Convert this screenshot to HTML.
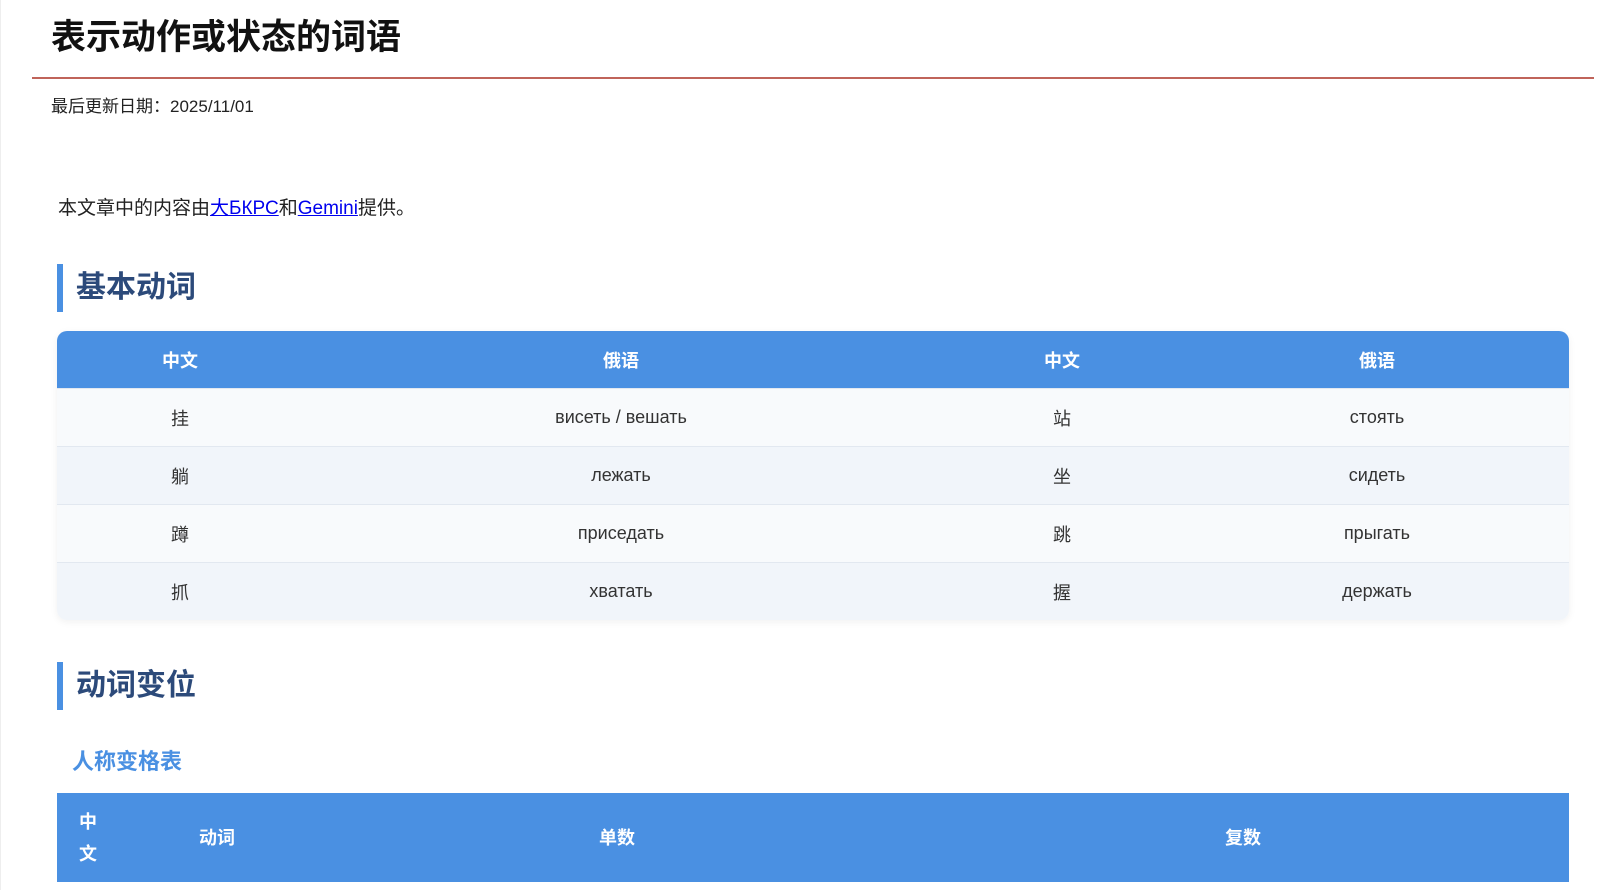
<!DOCTYPE html>
<html><head><meta charset="utf-8"><style>
*{box-sizing:border-box}
body{margin:0;width:1615px;height:890px;overflow:hidden;background:#fff;font-family:"Liberation Sans","Noto Sans CJK SC",sans-serif;color:#222;border-left:1px solid #eee}
h1{position:absolute;left:51px;top:14px;margin:0;font-size:35px;font-weight:bold;color:#111;line-height:48px}
.rule{position:absolute;left:32px;top:77px;width:1562px;height:2px;background:#c0645a}
.date{position:absolute;left:51px;top:96px;font-size:17px;line-height:22px}
.intro{position:absolute;left:58px;top:197px;font-size:19px;line-height:24px}
.intro a{color:#0000ee}
.h2{position:absolute;left:57px;border-left:6px solid #4a90e2;padding-left:13px;font-size:30px;font-weight:bold;color:#2c4a7a;height:48px;line-height:48px}
.h3{position:absolute;left:72px;top:748px;font-size:22px;font-weight:bold;color:#4a90e2;line-height:28px}
table{position:absolute;left:57px;width:1512px;border-collapse:separate;border-spacing:0;font-size:18px;table-layout:fixed}
.t1{top:331px;border-radius:10px;overflow:hidden;box-shadow:0 2px 8px rgba(0,0,0,.06)}
th{background:#4a90e2;color:#fff;font-weight:bold;text-align:center}
.t1 th{height:57px}
.t1 td{height:58px;text-align:center;color:#333;border-top:1px solid #e2e8f0}
.t1 tr:nth-child(odd) td{background:#f8fafc}
.t1 tr:nth-child(even) td{background:#f1f5fa}
.t2{top:793px}
.t2 th{height:89px;line-height:32px}
</style></head><body>
<h1>表示动作或状态的词语</h1>
<div class="rule"></div>
<div class="date">最后更新日期：2025/11/01</div>
<div class="intro">本文章中的内容由<a href="#">大БКРС</a>和<a href="#">Gemini</a>提供。</div>
<div class="h2" style="top:264px">基本动词</div>
<table class="t1">
<colgroup><col style="width:246px"><col style="width:636px"><col style="width:246px"><col style="width:384px"></colgroup>
<thead><tr><th>中文</th><th>俄语</th><th>中文</th><th>俄语</th></tr></thead>
<tbody>
<tr><td>挂</td><td>висеть / вешать</td><td>站</td><td>стоять</td></tr>
<tr><td>躺</td><td>лежать</td><td>坐</td><td>сидеть</td></tr>
<tr><td>蹲</td><td>приседать</td><td>跳</td><td>прыгать</td></tr>
<tr><td>抓</td><td>хватать</td><td>握</td><td>держать</td></tr>
</tbody></table>
<div class="h2" style="top:662px">动词变位</div>
<div class="h3">人称变格表</div>
<table class="t2">
<colgroup><col style="width:60px"><col style="width:200px"><col style="width:600px"><col style="width:652px"></colgroup>
<thead><tr><th style="padding:0 20px 0 22px;text-align:left">中文</th><th>动词</th><th>单数</th><th>复数</th></tr></thead>
</table>
</body></html>
